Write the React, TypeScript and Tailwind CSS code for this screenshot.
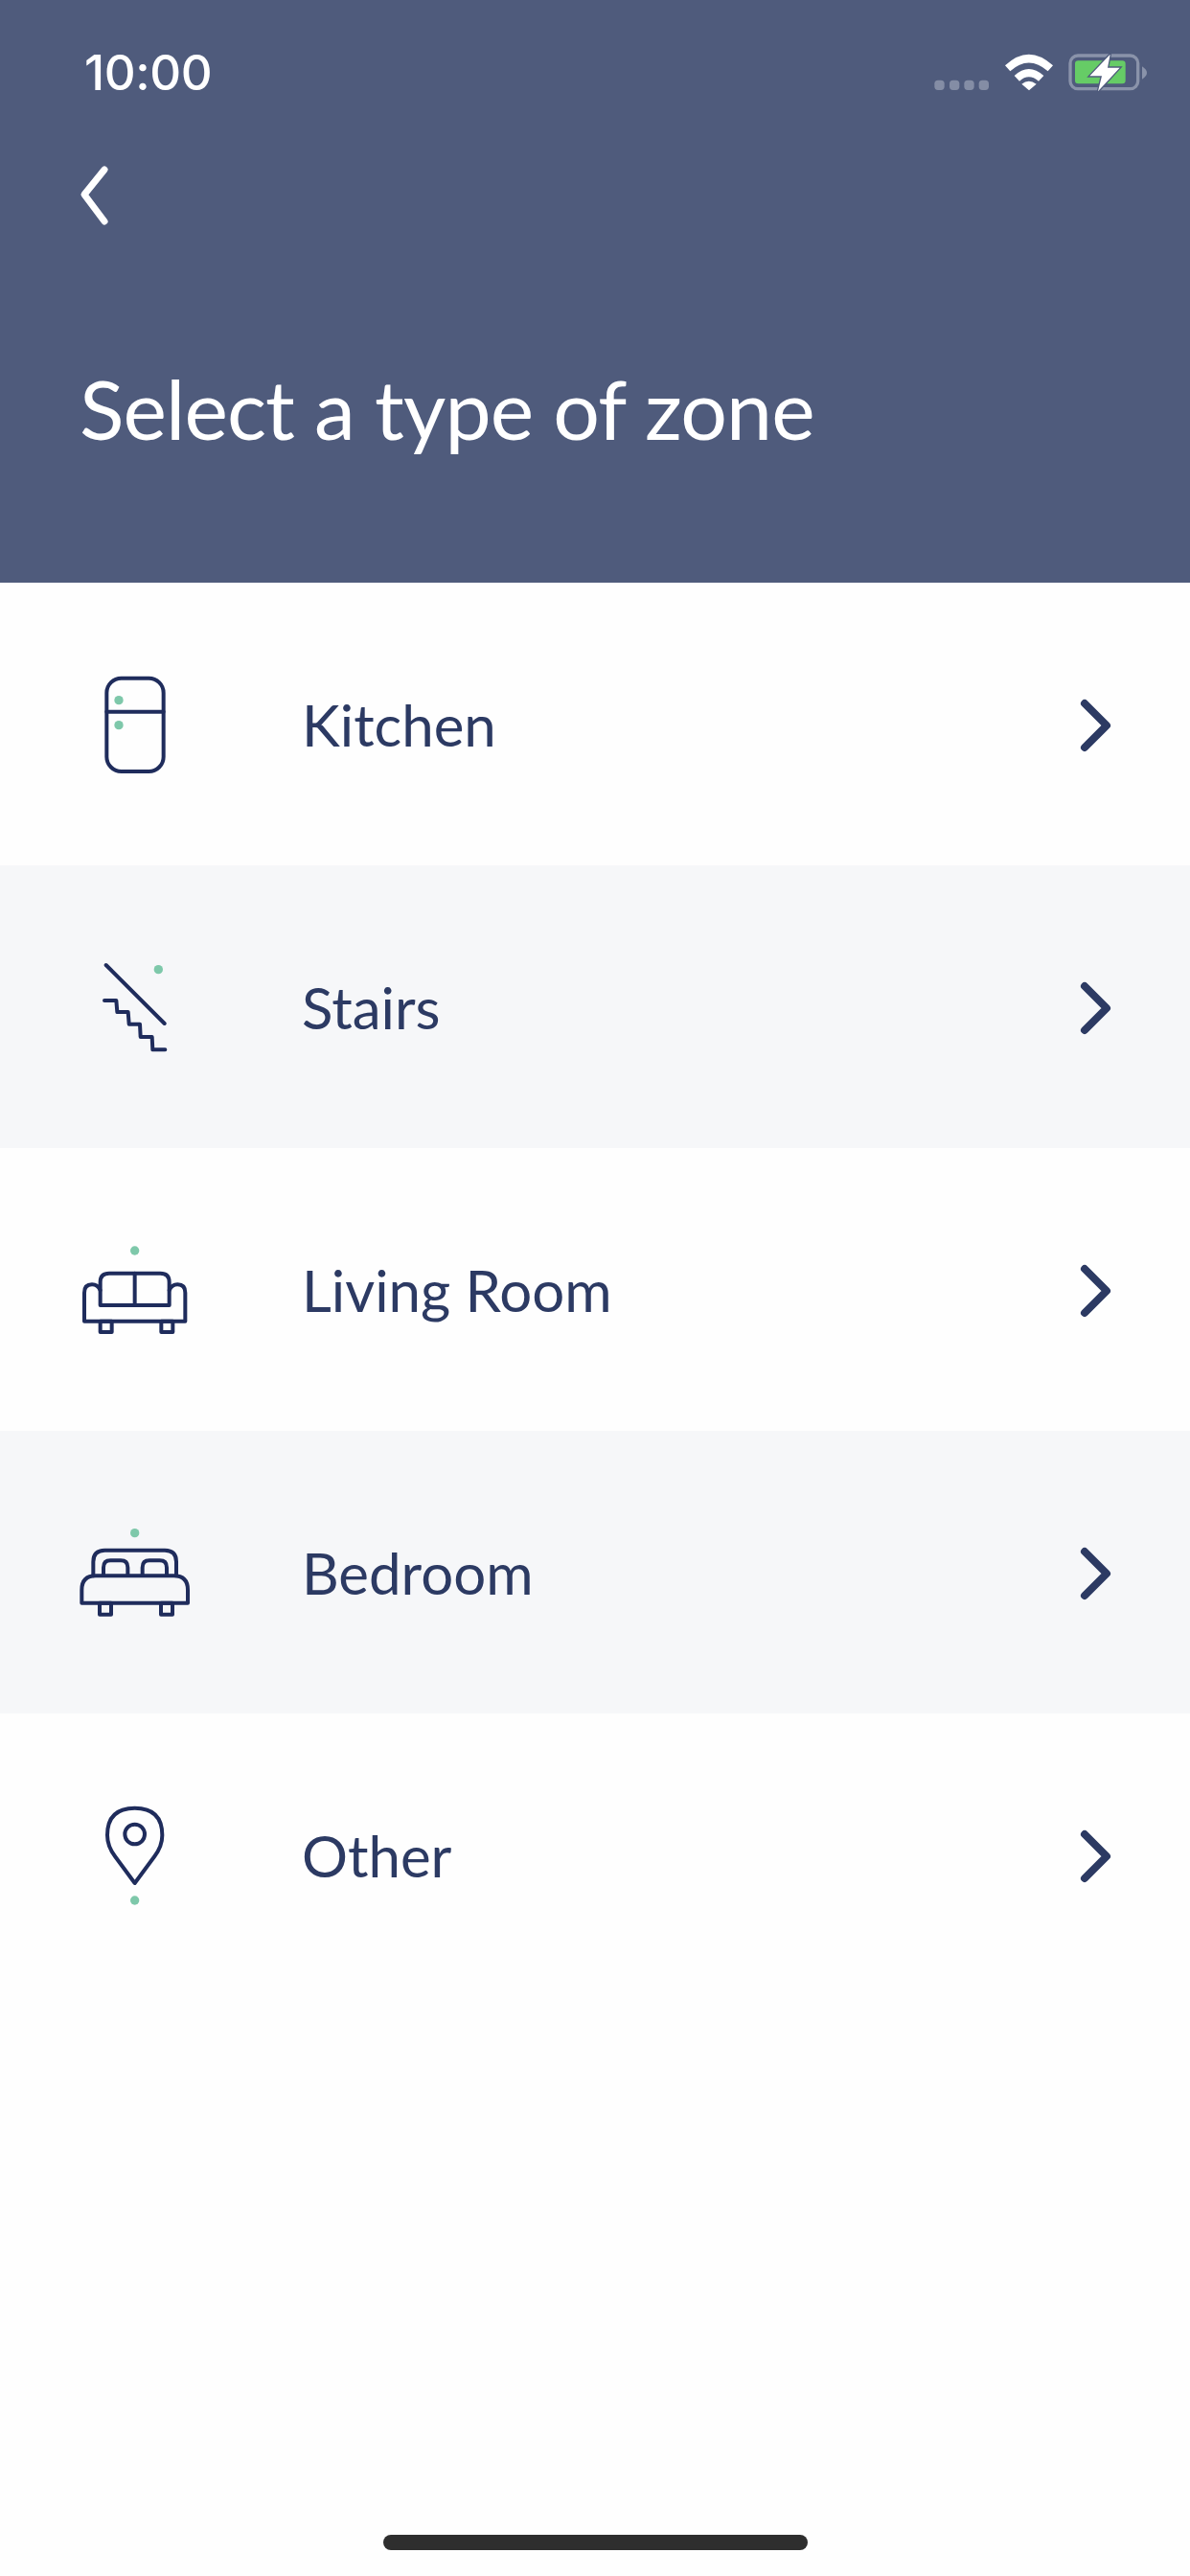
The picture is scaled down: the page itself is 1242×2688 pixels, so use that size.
import React from "react";

const ink = "#1f2c5c";
const mint = "#7ec8aa";

const Dot = ({ x, y }: { x: number; y: number }) => <circle cx={x} cy={y} r="14" fill={mint} />;

// icon drawings are in 3x pixels of a 160px box
const IconBox = ({ dy, children }: { dy: number; children: React.ReactNode }) => (
  <svg width="160" height="160" viewBox="0 0 480 480" className="shrink-0" fill="none" stroke={ink} strokeWidth="12" strokeLinecap="round" strokeLinejoin="round">
    <g transform={`translate(0 ${dy})`}>{children}</g>
  </svg>
);

const Fridge = () => (
  <IconBox dy={13}>
    <rect x="154" y="82" width="178" height="292" rx="46" />
    <path d="M154 187H332" />
    <g stroke="none">
      <Dot x={192} y={151} />
      <Dot x={192} y={229} />
    </g>
  </IconBox>
);

const Stairs = () => (
  <IconBox dy={28}>
    <path d="M152 80L335 263" />
    <path d="M147 191H184L187 227H221L224 265H258L260 305H296L298 345H337" />
    <g stroke="none">
      <Dot x={316} y={94} />
    </g>
  </IconBox>
);

const Sofa = () => (
  <IconBox dy={43}>
    <path d="M134 245V172Q134 145 162 145H322Q350 145 350 172V245Z" />
    <path d="M242 145V245" />
    <path d="M134 198Q126 180 108 180Q84 180 84 206V295H400V206Q400 180 376 180Q358 180 350 198" />
    <rect x="134" y="295" width="36" height="34" />
    <rect x="325" y="295" width="36" height="34" />
    <g stroke="none">
      <Dot x={242} y={74} />
    </g>
  </IconBox>
);

const Bed = () => (
  <IconBox dy={28}>
    <path d="M112 222V178Q112 142 148 142H336Q372 142 372 178V222" />
    <path d="M144 218V196Q144 174 166 174H198Q220 174 220 196V218" />
    <path d="M266 218V196Q266 174 288 174H320Q342 174 342 196V218" />
    <path d="M76 307V266Q76 222 120 222H364Q408 222 408 266V307Z" />
    <rect x="132" y="307" width="36" height="36" />
    <rect x="324" y="307" width="36" height="36" />
    <g stroke="none">
      <Dot x={242} y={88} />
    </g>
  </IconBox>
);

const Pin = () => (
  <IconBox dy={47}>
    <path d="M242 280L180 196Q156 164 156 130Q156 45 242 45Q328 45 328 130Q328 164 304 196Z" />
    <circle cx="242" cy="127" r="31" />
    <g stroke="none">
      <Dot x={242} y={334} />
    </g>
  </IconBox>
);

const rows = [
  { label: "Kitchen", icon: <Fridge /> },
  { label: "Stairs", icon: <Stairs /> },
  { label: "Living Room", icon: <Sofa /> },
  { label: "Bedroom", icon: <Bed /> },
  { label: "Other", icon: <Pin /> },
];

const StatusIcons = () => (
  <svg width="280" height="70" viewBox="0 0 840 210" className="shrink-0">
    {[100, 147, 193, 239].map((x) => (
      <rect key={x} x={x} y="131" width="31" height="31" rx="11" fill="#848da5" />
    ))}
    <path d="M321 85Q395 15 471 85L455 103Q395 50 337 103Z" fill="#fff" />
    <path d="M350 117Q395 75 442 117L426 134Q395 108 366 134Z" fill="#fff" />
    <path d="M373 143Q395 125 419 143L396 163Z" fill="#fff" />
    <rect x="525" y="54" width="212" height="104" rx="24" fill="none" stroke="#8a93aa" strokeWidth="10" />
    <rect x="540" y="70" width="158" height="72" rx="10" fill="#66cc66" />
    <path d="M750 88Q765 98 765 108Q765 118 750 128Z" fill="#8a93aa" />
    <path d="M650 50L586 118H624L612 166L680 92H642Z" fill="#fff" stroke="#4f5b7c" strokeWidth="8" paintOrder="stroke" />
  </svg>
);

export default function App() {
  return (
    <div className="flex h-[2688px] w-[1242px] flex-col overflow-hidden bg-[#fefefe] font-['Lato',sans-serif]">
      <header className="flex h-[608px] shrink-0 flex-col bg-[#4f5b7c] text-white">
        <div className="flex items-start justify-between pl-[88px] pr-[20px] pt-[40px]">
          <span className="font-['Inter',sans-serif] text-[51px] leading-[72px] font-medium tracking-[-0.4px]">10:00</span>
          <StatusIcons />
        </div>
        <svg width="44" height="68" viewBox="0 0 44 68" className="ml-[76px] mt-[58px]" fill="none" stroke="#fff" strokeWidth="7" strokeLinecap="round" strokeLinejoin="round">
          <path d="M33 7L12 33L33 61" />
        </svg>
        <h1 className="ml-[83px] mt-[138px] text-[86px] leading-[100px] font-normal tracking-[-0.9px]">Select a type of zone</h1>
      </header>
      <ul className="flex-1">
        {rows.map((row, index) => (
          <li key={row.label} className={`flex h-[295px] items-center pl-[60px] pr-[78px] ${index % 2 === 1 ? "bg-[#f6f7f9]" : ""}`}>
            {row.icon}
            <span className="ml-[95px] flex-1 text-[60px] leading-[70px] text-[#2c3a63]">{row.label}</span>
            <svg width="40" height="60" viewBox="0 0 40 60" fill="none" stroke="#2c3a63" strokeWidth="8" strokeLinecap="round" strokeLinejoin="round">
              <path d="M8 8L31 31L8 54" />
            </svg>
          </li>
        ))}
      </ul>
      <div className="flex justify-center pb-[27px]">
        <div className="h-[16px] w-[443px] rounded-full bg-[#2e2e2e]" />
      </div>
    </div>
  );
}
